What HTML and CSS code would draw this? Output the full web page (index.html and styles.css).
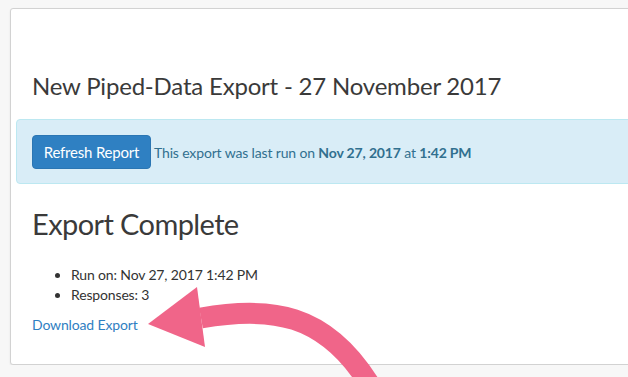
FILE: index.html
```html
<!DOCTYPE html>
<html lang="en">
<head>
  <meta charset="UTF-8" />
  <title>New Piped-Data Export</title>
  <link rel="stylesheet" href="styles.css">
</head>
<body>

<div class="panel">
  <h2 class="report-title">New Piped-Data Export - 27 November 2017</h2>

  <div class="alert-info">
    <button type="button" class="btn-refresh">Refresh Report</button>
    <span class="last-run">This export was last run on <b>Nov 27, 2017</b> at <b>1:42 PM</b></span>
  </div>

  <h1 class="status">Export Complete</h1>

  <ul class="details">
    <li>Run on: Nov 27, 2017 1:42 PM</li>
    <li>Responses: 3</li>
  </ul>

  <a href="#" class="download">Download Export</a>
</div>

<!-- callout arrow drawn on top of the page -->
<svg class="callout" width="628" height="377" viewBox="0 0 628 377">
  <path d="M201,318 C270,306 325,312 370,385" fill="none" stroke="#f06589" stroke-width="21" />
  <polygon points="148,324 197,287 205,347" fill="#f06589" />
</svg>

</body>
</html>
```

FILE: styles.css
```css
html, body {
  overflow: hidden;
}
body {
  margin: 0;
  background: #f7f7f7;
  font-family: Lato, "Open Sans", sans-serif;
  color: #333;
  font-size: 14px;
  letter-spacing: -0.15px;
}
.panel {
  width: 700px;
  margin: 8px 0 0 10px;
  padding: 62px 21px 29px;
  background: #fff;
  border: 1px solid #d2d2d2;
  border-radius: 3px;
  box-shadow: 0 1px 2px rgba(0, 0, 0, 0.08);
}
.report-title {
  margin: 0 0 18px;
  font-size: 24px;
  line-height: 30px;
  font-weight: 400;
  letter-spacing: -0.2px;
  color: #3a3a3a;
}
.alert-info {
  display: flex;
  align-items: center;
  margin-left: -16px;
  padding: 15px 15px 14px;
  background: #d9edf7;
  border: 1px solid #bce8f1;
  border-radius: 4px;
  color: #31708f;
}
.btn-refresh {
  height: 34px;
  width: 119px;
  padding: 0;
  font-family: inherit;
  font-size: 15px;
  letter-spacing: -0.2px;
  color: #fff;
  background: #2f80c2;
  border: 1px solid #2b76b3;
  border-radius: 4px;
}
.last-run {
  margin-left: 3px;
}
.status {
  margin: 22px 0 23px;
  font-size: 29px;
  line-height: 36px;
  font-weight: 400;
  letter-spacing: -0.6px;
  color: #3a3a3a;
}
.details {
  margin: 0 0 10px;
  padding-left: 39px;
  line-height: 20px;
}
.download {
  display: block;
  line-height: 20px;
  color: #2f80c2;
  text-decoration: none;
}
.callout {
  position: absolute;
  top: 0;
  left: 0;
}
```
